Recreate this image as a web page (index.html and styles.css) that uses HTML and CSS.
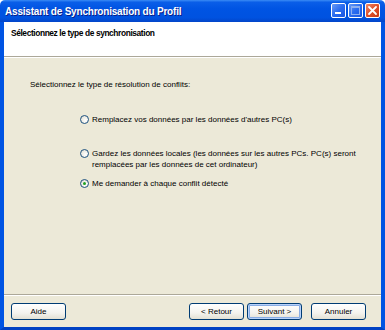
FILE: index.html
```html
<!DOCTYPE html>
<html lang="fr">
<head>
<meta charset="utf-8">
<link rel="stylesheet" href="styles.css">
</head>
<body>
<div class="window">
  <div class="titlebar">
    <span class="title">Assistant de Synchronisation du Profil</span>
    <div class="tbtns">
      <span class="tbtn"><svg width="15" height="15" viewBox="0 0 15 15"><rect x="4" y="9" width="6" height="2" fill="#fff"/></svg></span>
      <span class="tbtn"><svg width="15" height="15" viewBox="0 0 15 15"><rect x="3.5" y="3.5" width="8" height="8" fill="none" stroke="#8fb0f0" stroke-width="1"/><rect x="3.5" y="3.5" width="8" height="1.5" fill="#8fb0f0"/></svg></span>
      <span class="tbtn close"><svg width="15" height="15" viewBox="0 0 15 15"><path d="M4 4 L11 11 M11 4 L4 11" stroke="#fff" stroke-width="1.8" stroke-linecap="round"/></svg></span>
    </div>
  </div>
  <div class="frame">
    <div class="header">Sélectionnez le type de synchronisation</div>
    <div class="content">
      <p class="prompt">Sélectionnez le type de résolution de conflits:</p>
      <div class="options">
        <label class="opt"><span class="radio"></span><span>Remplacez vos données par les données d'autres PC(s)</span></label>
        <label class="opt two"><span class="radio"></span><span>Gardez les données locales (les données sur les autres PCs. PC(s) seront<br>remplacées par les données de cet ordinateur)</span></label>
        <label class="opt three"><span class="radio checked"></span><span>Me demander à chaque conflit détecté</span></label>
      </div>
    </div>
    <div class="footer">
      <button class="btn">Aide</button>
      <div class="spacer"></div>
      <button class="btn">&lt; Retour</button>
      <button class="btn focus">Suivant &gt;</button>
      <button class="btn cancel">Annuler</button>
    </div>
  </div>
</div>
</body>
</html>
```
FILE: styles.css
```css
html, body { margin: 0; padding: 0; background: #fff; }
.window {
  width: 385px;
  height: 330px;
  display: flex;
  flex-direction: column;
  font-family: "Liberation Sans", Arial, sans-serif;
}
.titlebar {
  height: 22px;
  flex: none;
  display: flex;
  align-items: center;
  justify-content: space-between;
  padding: 0 5px 0 5px;
  background: linear-gradient(to bottom, #3b8cf5 0%, #0a5ee8 10%, #0054e3 40%, #0052e0 80%, #0345c9 100%);
  border-radius: 5px 5px 0 0;
}
.title {
  color: #fff;
  font-weight: bold;
  font-size: 10px;
  letter-spacing: -0.2px;
  text-shadow: 1px 1px 0 #0a1e8a;
}
.tbtns { display: flex; gap: 2px; margin-top: -1px; }
.tbtn {
  width: 15px; height: 15px;
  box-sizing: border-box;
  border: 1px solid #fff;
  border-radius: 2px;
  background: linear-gradient(135deg, #6a9bf5 0%, #2a6cf0 50%, #1a55e0 100%);
  display: block;
  overflow: hidden;
}
.tbtn svg { display: block; margin: -1px; }
.tbtn.close { background: linear-gradient(135deg, #ee8a6a 0%, #e0502a 50%, #c83a14 100%); }
.frame {
  flex: 1;
  display: flex;
  flex-direction: column;
  border-left: 4px solid #0054e3;
  border-right: 4px solid #0054e3;
  border-bottom: 3px solid #0041c3;
  background: #ece9d8;
}
.header {
  height: 35px;
  box-sizing: border-box;
  background: #fff;
  border-bottom: 1px solid #aca899;
  padding: 6px 0 0 7px;
  font-size: 8.4px;
  letter-spacing: -0.4px;
  font-weight: bold;
  color: #000;
  line-height: 11px;
}
.content {
  flex: 1;
  border-top: 1px solid #fff;
  border-bottom: 1px solid #aca899;
  font-size: 8px;
  color: #000;
  line-height: 11px;
}
.prompt { margin: 21px 0 0 26px; }
.options { margin: 24px 0 0 76px; display: flex; flex-direction: column; }
.opt { display: flex; align-items: flex-start; }
.opt.two { margin-top: 23px; }
.opt.three { margin-top: 8px; }
.radio {
  width: 9px; height: 9px;
  box-sizing: border-box;
  border: 1px solid #1c5180;
  border-radius: 50%;
  background: radial-gradient(circle at 65% 65%, #fff 0%, #f0efe8 50%, #d8d4c6 100%);
  margin: 1px 3px 0 0;
  flex: none;
  position: relative;
}
.radio.checked::after {
  content: "";
  position: absolute;
  left: 2px; top: 2px;
  width: 3px; height: 3px;
  border-radius: 50%;
  background: #21a121;
}
.footer {
  height: 32px;
  flex: none;
  border-top: 1px solid #fff;
  box-sizing: border-box;
  display: flex;
  align-items: flex-start;
  padding: 7px 15px 0 7px;
}
.spacer { flex: 1; }
.btn {
  width: 55px;
  height: 17px;
  padding: 0;
  font-family: "Liberation Sans", Arial, sans-serif;
  font-size: 8px;
  color: #000;
  border: 1px solid #003c74;
  border-radius: 3px;
  background: linear-gradient(to bottom, #fff 0%, #f4f3ee 60%, #e3e0d3 100%);
  margin-left: 3px;
}
.btn:first-child { margin-left: 0; }
.btn.focus { box-shadow: inset 0 0 0 1px #b8d2fa, inset 0 0 0 2px #89ade4; }
.btn.cancel { margin-left: 9px; }
```
